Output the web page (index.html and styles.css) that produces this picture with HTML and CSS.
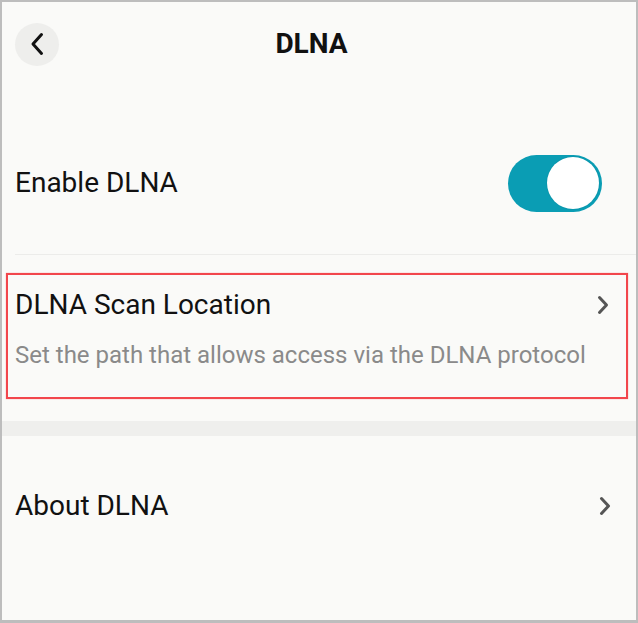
FILE: index.html
```html
<!DOCTYPE html>
<html lang="en">
<head>
  <meta charset="UTF-8">
  <meta name="viewport" content="width=device-width, initial-scale=1.0">
  <title>DLNA</title>
  <link rel="stylesheet" href="styles.css">
</head>
<body>
  <div class="screen">

    <header class="topbar">
      <div class="back">
        <svg width="14" height="24" viewBox="0 0 14 24">
          <path d="M11.5 2.5 L3 12 L11.5 21.5" fill="none" stroke="#111" stroke-width="3" stroke-linecap="round" stroke-linejoin="round"/>
        </svg>
      </div>
      <h1 class="title">DLNA</h1>
      <div></div>
    </header>

    <div class="row toggle_row">
      <span class="label">Enable DLNA</span>
      <span class="switch on"><span class="knob"></span></span>
    </div>

    <div class="scan_box">
      <div class="scan_head">
        <span class="label">DLNA Scan Location</span>
        <svg class="arrow" width="14" height="22" viewBox="0 0 14 22">
          <path d="M3.5 3.5 L10.5 11 L3.5 18.5" fill="none" stroke="#555" stroke-width="3" stroke-linecap="round" stroke-linejoin="round"/>
        </svg>
      </div>
      <p class="desc">Set the path that allows access via the DLNA protocol</p>
    </div>

    <div class="band"></div>

    <div class="row link_row">
      <span class="label">About DLNA</span>
      <svg class="arrow" width="14" height="22" viewBox="0 0 14 22">
        <path d="M3.5 3.5 L10.5 11 L3.5 18.5" fill="none" stroke="#555" stroke-width="3" stroke-linecap="round" stroke-linejoin="round"/>
      </svg>
    </div>

  </div>
</body>
</html>
```

FILE: styles.css
```css
* {
  margin: 0;
  padding: 0;
  box-sizing: border-box;
}

html {font-family: Roboto, "Noto Sans", sans-serif;}

body {
  background-color: #fafaf8;
}

.screen {
  width: 638px;
  height: 623px;
  border: 2px solid #bdbdbd;
  border-bottom-width: 3px;
  background-color: #fafaf8;
  color: #111;
}

/* header */
.topbar {
  display: grid;
  grid-template-columns: 1fr auto 1fr;
  align-items: center;
  height: 84px;
  padding-left: 13px;
  padding-right: 28px;
}

.back {
  width: 44px;
  height: 43px;
  border-radius: 50%;
  background-color: #eeeeec;
  display: flex;
  align-items: center;
  justify-content: center;
}

.title {
  font-size: 28px;
  font-weight: bold;
  line-height: 36px;
}

/* rows */
.row {
  display: flex;
  align-items: center;
  justify-content: space-between;
  padding-left: 13px;
}

.label {
  font-size: 28px;
  line-height: 36px;
}

.toggle_row {
  height: 143px;
  margin-top: 26px;
  margin-left: 13px;
  padding-left: 0;
  padding-right: 34px;
  border-bottom: 1px solid #ececea;
}

.switch {
  width: 94px;
  height: 57px;
  border-radius: 29px;
  background-color: #0a9db4;
  display: flex;
  align-items: center;
  padding: 3px;
}

.switch.on {
  justify-content: flex-end;
}

.knob {
  width: 52px;
  height: 52px;
  border-radius: 50%;
  background-color: #fff;
  box-shadow: 0 0 0 1px rgba(0,0,0,0.04);
}

/* highlighted item */
.scan_box {
  margin: 18px 8px 0 4px;
  border: 2px solid #f2464c;
  box-shadow: 0 0 1px #f8898c;
  padding: 12px 16px 26px 7px;
}

.scan_head {
  display: flex;
  align-items: center;
  justify-content: space-between;
}

.desc {
  margin-top: 16px;
  font-size: 24px;
  line-height: 32px;
  color: #8a8a8a;
}

.band {
  height: 15px;
  margin-top: 22px;
  background-color: #efefed;
}

.link_row {
  height: 140px;
  padding-right: 24px;
}
```
